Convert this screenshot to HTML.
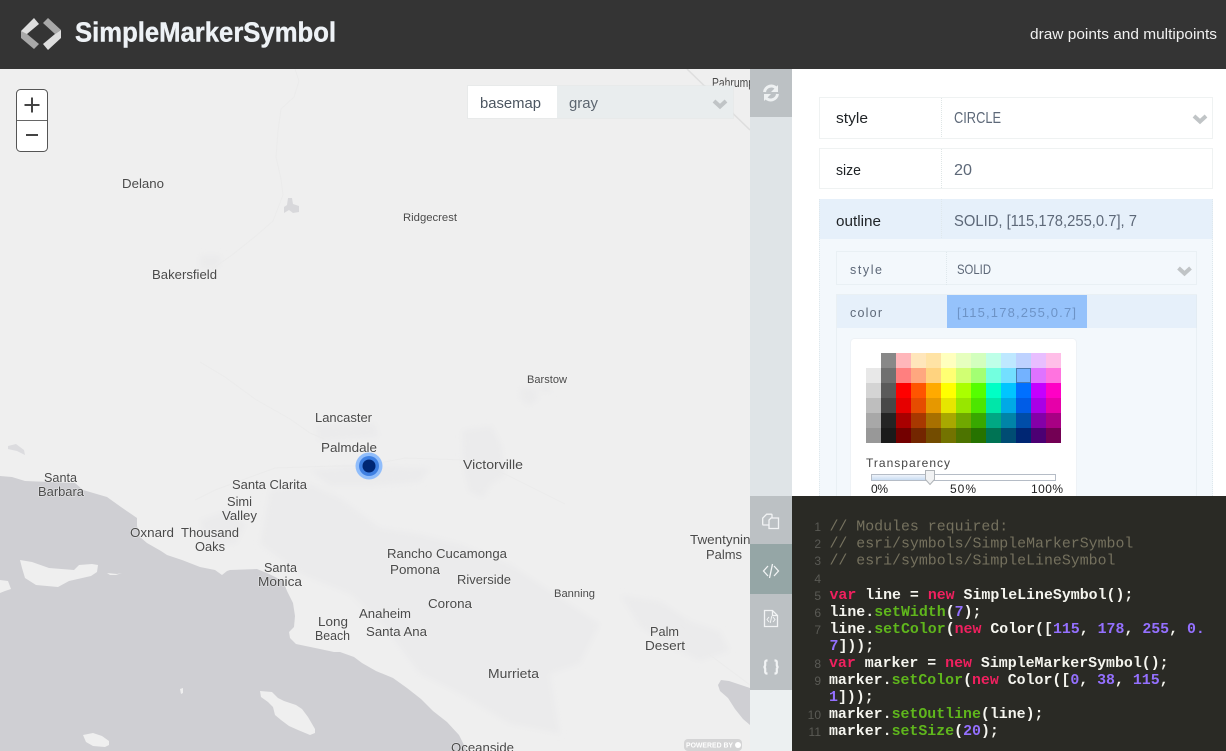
<!DOCTYPE html>
<html lang="en">
<head>
<meta charset="utf-8">
<title>SimpleMarkerSymbol</title>
<style>
html,body{margin:0;padding:0;width:1226px;height:751px;overflow:hidden;background:#fff}
svg{display:block;position:absolute;left:0;top:0}
text{font-family:"Liberation Sans",sans-serif}
.m text{fill:#4a4a4a;font-size:13px;stroke:#f4f4f4;stroke-width:1px;paint-order:stroke;stroke-opacity:.7}
.s text{font-size:11px}
.l text{fill:#1f2326;font-size:15px}
.v text{fill:#5d6878;font-size:15.500px}
.sub text{font-size:12.5px;fill:#5d6878}
.code text{font-family:"Liberation Mono",monospace;font-size:14.9px;font-weight:bold;fill:#f5f5ef;white-space:pre}
.code .c{font-weight:normal;fill:#75715e}
.code .n{font-weight:normal;fill:#5a5a55;font-size:12px;text-anchor:end;font-family:"Liberation Sans",sans-serif}
.k{fill:#f0205f}.f{fill:#5fb61c}.d{fill:#9470ff}
</style>
</head>
<body>
<svg width="1226" height="751" viewBox="0 0 1226 751" xmlns="http://www.w3.org/2000/svg">
<defs>
<clipPath id="mc"><rect x="0" y="69" width="750" height="682"/></clipPath>
<clipPath id="pc"><rect x="792" y="69" width="434" height="427"/></clipPath>
<linearGradient id="sl" x1="0" y1="0" x2="0" y2="1"><stop offset="0" stop-color="#eef3fa"/><stop offset="1" stop-color="#c8dcf2"/></linearGradient>
<filter id="bl" x="-10%" y="-10%" width="120%" height="120%"><feGaussianBlur stdDeviation="3"/></filter>
</defs>

<!-- map -->
<g clip-path="url(#mc)">
<rect x="0" y="69" width="750" height="682" fill="#efefef"/>
<!-- urban tint -->
<g fill="#ebebec" filter="url(#bl)">
<path d="M462 430l30-4 10 20 3 30-14 8-8 14-14-6-6-26z"/>
<path d="M310 470l60-4 60 2-10 14-50 4-40 0z"/>
<path d="M270 490l40-6 30 14 40 30 40 6 40 10 50 20 60 40 30 20-20 40-30 10 10 60-50-10-50-30-40-20-30-40-40-40-50-20-40-30z"/>
<path d="M620 595l40 6 30 20 30 10 10 20-30 10-30-14-30-20z"/>
<path d="M200 520l30-10 16 14-10 20-30 0z"/>
<path d="M315 425l60-2 4 14-60 4z"/>
<path d="M520 388h16l2 12-10 6-8-8zM540 386h10l2 6h-12z"/>
<path d="M200 255h22l-4 14h-18z"/>
</g>
<g fill="none" stroke="#ebebeb" stroke-width="1">
<path d="M295 69l4 12-5 16-13 12-3 22-2 26 5 22 2 16-10 26-16 14-25 20-20 14"/>
<path d="M200 362l25 15 30 22 35 20 20 14 14 6"/>
<path d="M195 500l20-10 60-22 60-2 30 0 40-8 60 2 40 14 60 30"/>
<path d="M680 625l30 30 40 30"/>
</g>
<path d="M687 69l63 61" fill="none" stroke="#dedede" stroke-width="1.5"/>
<path d="M284 207l3-2 1-7 4 0 1 6 6 2 0 6-6 1-4-3-5 3z" fill="#d8d8db"/>
<path d="M8 446l8-2 8 6 1 5-8-4-9-2z" fill="#dcdcdf"/>
<!-- ocean -->
<path fill="#cfcfd3" d="M0 476l12 1 13 4 25 1 25 1 8 7 24 7 14 10 16 11 0 8 3 11 7 6 14 8 6 4 15 5 18 7 15 3 7 5 5-4 3-1 27-1 12 5 14 7 4 10 6 12 2 13-1 11-5 5 1 6 6 6 24 5 14 3 6 0 14 5 8 6 14 8 17 7 14 10 14 11 12 12 14 11 12 13 6 12 4 8H0z"/>
<!-- islands -->
<g fill="#efefef">
<path d="M20 560l12 2 17 6 25 2 5-5 13-1 6 1-1 7-6 4-22 5-11 6-22-2-11-7-3-10z"/>
<path d="M107 573l10 1 5-1-6 2-6 0z"/>
<path d="M0 580l8 1 3 8-6 2-5 2z"/>
<path d="M260 691l12 1 6 6 6 3 12 4 6 4 6 8 7 12 0 4-5 2-12-5-9-4-8-6-6-5-2-8-5-5-7-5z"/>
<path d="M83 735l10-2 9 3 7 5 0 4-4 2-12-1-7-4z"/>
<path d="M180 689l3-1 0 5-2 1z"/>
</g>
<path fill="#cfcfd3" d="M718 685l3-5 8 1 21 7v37l-7-6-8-10-7-11-8-7z"/>
<!-- labels -->
<g class="m">
<text x="712" y="87" textLength="42" lengthAdjust="spacingAndGlyphs">Pahrump</text>
<text x="122" y="188" textLength="42" lengthAdjust="spacingAndGlyphs">Delano</text>
<text x="152" y="279" textLength="65" lengthAdjust="spacingAndGlyphs">Bakersfield</text>
<text x="315" y="422" textLength="57" lengthAdjust="spacingAndGlyphs">Lancaster</text>
<text x="321" y="452" textLength="56" lengthAdjust="spacingAndGlyphs">Palmdale</text>
<text x="463" y="469" textLength="60" lengthAdjust="spacingAndGlyphs">Victorville</text>
<text x="44" y="482" textLength="33" lengthAdjust="spacingAndGlyphs">Santa</text>
<text x="38" y="496" textLength="46" lengthAdjust="spacingAndGlyphs">Barbara</text>
<text x="232" y="489" textLength="75" lengthAdjust="spacingAndGlyphs">Santa Clarita</text>
<text x="227" y="506" textLength="25" lengthAdjust="spacingAndGlyphs">Simi</text>
<text x="222" y="520" textLength="35" lengthAdjust="spacingAndGlyphs">Valley</text>
<text x="130" y="537" textLength="44" lengthAdjust="spacingAndGlyphs">Oxnard</text>
<text x="181" y="537" textLength="58" lengthAdjust="spacingAndGlyphs">Thousand</text>
<text x="195" y="551" textLength="30" lengthAdjust="spacingAndGlyphs">Oaks</text>
<text x="264" y="572" textLength="33" lengthAdjust="spacingAndGlyphs">Santa</text>
<text x="258" y="586" textLength="44" lengthAdjust="spacingAndGlyphs">Monica</text>
<text x="387" y="558" textLength="120" lengthAdjust="spacingAndGlyphs">Rancho Cucamonga</text>
<text x="390" y="574" textLength="50" lengthAdjust="spacingAndGlyphs">Pomona</text>
<text x="457" y="584" textLength="54" lengthAdjust="spacingAndGlyphs">Riverside</text>
<text x="428" y="608" textLength="44" lengthAdjust="spacingAndGlyphs">Corona</text>
<text x="359" y="618" textLength="52" lengthAdjust="spacingAndGlyphs">Anaheim</text>
<text x="366" y="636" textLength="61" lengthAdjust="spacingAndGlyphs">Santa Ana</text>
<text x="318" y="626" textLength="30" lengthAdjust="spacingAndGlyphs">Long</text>
<text x="315" y="640" textLength="35" lengthAdjust="spacingAndGlyphs">Beach</text>
<text x="650" y="636" textLength="29" lengthAdjust="spacingAndGlyphs">Palm</text>
<text x="645" y="650" textLength="40" lengthAdjust="spacingAndGlyphs">Desert</text>
<text x="690" y="544" textLength="68" lengthAdjust="spacingAndGlyphs">Twentynine</text>
<text x="706" y="559" textLength="36" lengthAdjust="spacingAndGlyphs">Palms</text>
<text x="488" y="678" textLength="51" lengthAdjust="spacingAndGlyphs">Murrieta</text>
<text x="451" y="752" textLength="63" lengthAdjust="spacingAndGlyphs">Oceanside</text>
</g>
<g class="m s">
<text x="403" y="221" textLength="54" lengthAdjust="spacingAndGlyphs">Ridgecrest</text>
<text x="527" y="383" textLength="40" lengthAdjust="spacingAndGlyphs">Barstow</text>
<text x="554" y="597" textLength="41" lengthAdjust="spacingAndGlyphs">Banning</text>
</g>
<!-- marker -->
<circle cx="369" cy="466" r="13.5" fill="#90bdfb"/>
<circle cx="369" cy="466" r="10" fill="#3f80e2"/>
<circle cx="369" cy="466" r="6.5" fill="#002673"/>
<!-- powered by -->
<rect x="684" y="739" width="58" height="12" rx="4" fill="#b9b9bc" opacity=".5"/>
<text x="686" y="747.500" font-size="7" font-weight="bold" fill="#fff" textLength="47" lengthAdjust="spacingAndGlyphs">POWERED BY</text>
<circle cx="738" cy="745" r="3" fill="#fff"/>
</g>

<!-- zoom control -->
<rect x="16.500" y="89.500" width="31" height="62" rx="4" fill="#fff" stroke="#555"/>
<path d="M17 120.500h30" stroke="#666"/>
<path d="M24.500 105h15M32 97.500v15" stroke="#444" stroke-width="2"/>
<path d="M26 135h12" stroke="#444" stroke-width="2"/>

<!-- basemap -->
<rect x="468" y="86" width="265" height="32" fill="#e9edee"/>
<rect x="468" y="86" width="89" height="32" fill="#fff"/>
<rect x="467.500" y="85.500" width="266" height="33" fill="none" stroke="#e2e6e6" stroke-dasharray="1 1"/>
<text x="480" y="108" font-size="15" fill="#4c5661" textLength="61" lengthAdjust="spacingAndGlyphs">basemap</text>
<text x="569" y="108" font-size="15" fill="#5d6670" textLength="29" lengthAdjust="spacingAndGlyphs">gray</text>
<path d="M714 101l6 5.500 6-5.500" fill="none" stroke="#c0c4c6" stroke-width="4"/>

<!-- header -->
<rect x="0" y="0" width="1226" height="69" fill="#343434"/>
<path d="M21 31L34 18l5 6-12 10-6 4z" fill="#dedede"/>
<path d="M21 31v7l13 11 5-5-12-10z" fill="#a8a8a8"/>
<path d="M48 18l-5 5 12 11 6-4v0z" fill="#a8a8a8"/>
<path d="M61 30v8L48 50l-5-6 12-10z" fill="#dedede"/>
<text x="75" y="41.500" font-size="27.500" font-weight="bold" fill="#eef2f6" stroke="#eef2f6" stroke-width=".4" textLength="261" lengthAdjust="spacingAndGlyphs">SimpleMarkerSymbol</text>
<text x="1030" y="39" font-size="15" fill="#f0f0f0" textLength="187" lengthAdjust="spacingAndGlyphs">draw points and multipoints</text>

<!-- side strip -->
<rect x="750" y="69" width="42" height="682" fill="#dfe4e7"/>
<rect x="750" y="69" width="42" height="48" fill="#bcc1c4"/>
<g fill="none" stroke="#eef1f2" stroke-width="3">
<path d="M764.500 92a6.800 6.800 0 0 1 12-3.500"/>
<path d="M777.500 94a6.800 6.800 0 0 1-12 3.500"/>
</g>
<path d="M778 85v7h-7zM764 101v-7h7z" fill="#eef1f2"/>
<rect x="750" y="496" width="42" height="194" fill="#bcc1c4"/>
<rect x="750" y="544" width="42" height="50" fill="#95a6a6"/>
<rect x="750" y="690" width="42" height="61" fill="#ecf0f1"/>
<g fill="none" stroke="#f2f4f5" stroke-width="1.300">
<path d="M769 525h-5.500a.8.800 0 0 1-.8-.8v-6l4-4h4.500a.8.800 0 0 1 .8.8v3"/>
<path d="M771 518h7.500v10.500h-9.500v-8.500z" fill="#bcc1c4"/>
<path d="M768 566l-4.500 5 4.500 5M774 566l4.500 5-4.500 5M772.500 564l-3 14"/>
<path d="M764.500 610.500h8l5 5v11h-13zM772.500 610.500v5h5"/>
<path d="M769 617l-2 2.500 2 2.500M773 617l2 2.500-2 2.500M771.800 616l-1.600 7" stroke-width="1"/>
<path d="M767.500 660.500h-.8a1.500 1.500 0 0 0-1.500 1.500v3a2 2 0 0 1-1.500 2 2 2 0 0 1 1.500 2v3a1.500 1.500 0 0 0 1.500 1.500h.8M774.500 660.500h.8a1.500 1.500 0 0 1 1.500 1.500v3a2 2 0 0 0 1.500 2 2 2 0 0 0-1.500 2v3a1.500 1.500 0 0 1-1.500 1.500h-.8" stroke-width="2.200"/>
</g>

<!-- panel -->
<g clip-path="url(#pc)">
<g fill="#fff" stroke="#dfe6e6" stroke-dasharray="1 1">
<rect x="819.500" y="97.500" width="393" height="41"/>
<rect x="819.500" y="148.500" width="393" height="40"/>
</g>
<path d="M941.500 98v40M941.500 149v40" stroke="#dfe6e6" stroke-dasharray="1 1"/>
<rect x="819" y="199" width="394" height="300" fill="#f3f8fc"/>
<rect x="819" y="199" width="394" height="40" fill="#e6f0fa"/>
<path d="M941.500 199v40M1212.500 199v300M819.500 199v300" stroke="#dfe8ec" stroke-dasharray="1 1"/>
<g class="l">
<text x="836" y="123" textLength="32" lengthAdjust="spacingAndGlyphs">style</text>
<text x="836" y="175" textLength="25" lengthAdjust="spacingAndGlyphs">size</text>
<text x="836" y="226" textLength="45" lengthAdjust="spacingAndGlyphs">outline</text>
</g>
<g class="v">
<text x="954" y="123" textLength="47" lengthAdjust="spacingAndGlyphs">CIRCLE</text>
<text x="954" y="175" textLength="18" lengthAdjust="spacingAndGlyphs">20</text>
<text x="954" y="226" textLength="183" lengthAdjust="spacingAndGlyphs">SOLID, [115,178,255,0.7], 7</text>
</g>
<path d="M1194 116l6 5.500 6-5.500M1178.500 268l6 5.500 6-5.500" fill="none" stroke="#c0c4c6" stroke-width="4"/>
<rect x="836.500" y="251.500" width="360" height="33" fill="none" stroke="#dfe8ec" stroke-dasharray="1 1"/>
<path d="M946.500 252v33" stroke="#dfe8ec" stroke-dasharray="1 1"/>
<rect x="837" y="295" width="360" height="33" fill="#e6f0fa"/>
<rect x="836.500" y="294.500" width="360" height="210" fill="none" stroke="#dfe8ec" stroke-dasharray="1 1"/>
<rect x="947" y="295" width="140" height="33" fill="#95c2fb"/>
<g class="sub">
<text x="850" y="274" textLength="32">style</text>
<text x="850" y="317" textLength="32">color</text>
<text x="957" y="274" textLength="34" lengthAdjust="spacingAndGlyphs" style="font-size:14px">SOLID</text>
<text x="957" y="317" textLength="119" style="fill:#6d93c6;font-size:13px">[115,178,255,0.7]</text>
</g>
<rect x="850.500" y="338.500" width="226" height="170" rx="4" fill="#fff" stroke="#eef2f6"/>

<!-- palette -->
<g>
<g transform="translate(866 353)">
<path fill="#fff" d="M0 0h15v15H0z"/><path fill="#888888" d="M15 0h15v15H15z"/><path fill="#ffb6ba" d="M30 0h15v15H30z"/><path fill="#ffe6bb" d="M45 0h15v15H45z"/><path fill="#ffe3a5" d="M60 0h15v15H60z"/><path fill="#ffffbe" d="M75 0h15v15H75z"/><path fill="#e6ffbe" d="M90 0h15v15H90z"/><path fill="#d3ffbe" d="M105 0h15v15h-15z"/><path fill="#beffe8" d="M120 0h15v15h-15z"/><path fill="#bee8ff" d="M135 0h15v15h-15z"/><path fill="#bed2ff" d="M150 0h15v15h-15z"/><path fill="#e8beff" d="M165 0h15v15h-15z"/><path fill="#ffbee8" d="M180 0h15v15h-15z"/>
<path fill="#e8e8e8" d="M0 15h15v15H0z"/><path fill="#707070" d="M15 15h15v15H15z"/><path fill="#ff7f7f" d="M30 15h15v15H30z"/><path fill="#ffa77f" d="M45 15h15v15H45z"/><path fill="#ffd37f" d="M60 15h15v15H60z"/><path fill="#ffff73" d="M75 15h15v15H75z"/><path fill="#d1ff73" d="M90 15h15v15H90z"/><path fill="#a3ff73" d="M105 15h15v15h-15z"/><path fill="#73ffdf" d="M120 15h15v15h-15z"/><path fill="#73dfff" d="M135 15h15v15h-15z"/><path fill="#73b2ff" d="M150 15h15v15h-15z"/><path fill="#df73ff" d="M165 15h15v15h-15z"/><path fill="#ff73df" d="M180 15h15v15h-15z"/>
<path fill="#d4d4d4" d="M0 30h15v15H0z"/><path fill="#5a5a5a" d="M15 30h15v15H15z"/><path fill="#ff0000" d="M30 30h15v15H30z"/><path fill="#ff5500" d="M45 30h15v15H45z"/><path fill="#ffaa00" d="M60 30h15v15H60z"/><path fill="#ffff00" d="M75 30h15v15H75z"/><path fill="#aaff00" d="M90 30h15v15H90z"/><path fill="#55ff00" d="M105 30h15v15h-15z"/><path fill="#00ffc5" d="M120 30h15v15h-15z"/><path fill="#00c5ff" d="M135 30h15v15h-15z"/><path fill="#0070ff" d="M150 30h15v15h-15z"/><path fill="#c500ff" d="M165 30h15v15h-15z"/><path fill="#ff00c5" d="M180 30h15v15h-15z"/>
<path fill="#bebebe" d="M0 45h15v15H0z"/><path fill="#484848" d="M15 45h15v15H15z"/><path fill="#e60000" d="M30 45h15v15H30z"/><path fill="#e64c00" d="M45 45h15v15H45z"/><path fill="#e69800" d="M60 45h15v15H60z"/><path fill="#e6e600" d="M75 45h15v15H75z"/><path fill="#98e600" d="M90 45h15v15H90z"/><path fill="#4ce600" d="M105 45h15v15h-15z"/><path fill="#00e6a9" d="M120 45h15v15h-15z"/><path fill="#00a9e6" d="M135 45h15v15h-15z"/><path fill="#005ce6" d="M150 45h15v15h-15z"/><path fill="#a900e6" d="M165 45h15v15h-15z"/><path fill="#e600a9" d="M180 45h15v15h-15z"/>
<path fill="#a8a8a8" d="M0 60h15v15H0z"/><path fill="#242424" d="M15 60h15v15H15z"/><path fill="#a80000" d="M30 60h15v15H30z"/><path fill="#a83800" d="M45 60h15v15H45z"/><path fill="#a87000" d="M60 60h15v15H60z"/><path fill="#a8a800" d="M75 60h15v15H75z"/><path fill="#70a800" d="M90 60h15v15H90z"/><path fill="#38a800" d="M105 60h15v15h-15z"/><path fill="#00a884" d="M120 60h15v15h-15z"/><path fill="#0084a8" d="M135 60h15v15h-15z"/><path fill="#004da8" d="M150 60h15v15h-15z"/><path fill="#8400a8" d="M165 60h15v15h-15z"/><path fill="#a80084" d="M180 60h15v15h-15z"/>
<path fill="#989898" d="M0 75h15v15H0z"/><path fill="#1a1a1a" d="M15 75h15v15H15z"/><path fill="#730000" d="M30 75h15v15H30z"/><path fill="#732600" d="M45 75h15v15H45z"/><path fill="#734c00" d="M60 75h15v15H60z"/><path fill="#737300" d="M75 75h15v15H75z"/><path fill="#4c7300" d="M90 75h15v15H90z"/><path fill="#267300" d="M105 75h15v15h-15z"/><path fill="#007354" d="M120 75h15v15h-15z"/><path fill="#004c73" d="M135 75h15v15h-15z"/><path fill="#002673" d="M150 75h15v15h-15z"/><path fill="#4c0073" d="M165 75h15v15h-15z"/><path fill="#730054" d="M180 75h15v15h-15z"/>
<rect x="150.500" y="15.500" width="14" height="14" fill="none" stroke="#4c7cb0" stroke-width="1"/>
</g>
</g>
<text x="866" y="467" font-size="12" fill="#444" textLength="84">Transparency</text>
<rect x="871.500" y="474.500" width="184" height="6" fill="#fff" stroke="#b5bcc6"/>
<rect x="872" y="475" width="58" height="5" fill="url(#sl)"/>
<path d="M925.500 470.500h9v9l-4.500 5-4.500-5z" fill="#f1f2f3" stroke="#b0b4b8"/>
<g font-size="12" fill="#222">
<text x="871" y="493" textLength="17">0%</text>
<text x="950" y="493" textLength="26">50%</text>
<text x="1031" y="493" textLength="32">100%</text>
</g>
</g>

<!-- code -->
<rect x="792" y="496" width="434" height="255" fill="#2a2a25"/>
<g class="code" xml:space="preserve">
<text class="n" x="821" y="531">1</text>
<text class="n" x="821" y="548">2</text>
<text class="n" x="821" y="565">3</text>
<text class="n" x="821" y="583">4</text>
<text class="n" x="821" y="600">5</text>
<text class="n" x="821" y="617">6</text>
<text class="n" x="821" y="634">7</text>
<text class="n" x="821" y="668">8</text>
<text class="n" x="821" y="685">9</text>
<text class="n" x="821" y="719">10</text>
<text class="n" x="821" y="736">11</text>
<text class="c" x="829.500" y="530.500">// Modules required:</text>
<text class="c" x="829.500" y="547.500">// esri/symbols/SimpleMarkerSymbol</text>
<text class="c" x="829.500" y="564.500">// esri/symbols/SimpleLineSymbol</text>
<text x="829.500" y="599"><tspan class="k">var</tspan> line = <tspan class="k">new</tspan> SimpleLineSymbol();</text>
<text x="829.500" y="616">line.<tspan class="f">setWidth</tspan>(<tspan class="d">7</tspan>);</text>
<text x="829.500" y="633">line.<tspan class="f">setColor</tspan>(<tspan class="k">new</tspan> Color([<tspan class="d">115</tspan>, <tspan class="d">178</tspan>, <tspan class="d">255</tspan>, <tspan class="d">0.</tspan></text>
<text x="829.500" y="650"><tspan class="d">7</tspan>]));</text>
<text x="829" y="667"><tspan class="k">var</tspan> marker = <tspan class="k">new</tspan> SimpleMarkerSymbol();</text>
<text x="829" y="684">marker.<tspan class="f">setColor</tspan>(<tspan class="k">new</tspan> Color([<tspan class="d">0</tspan>, <tspan class="d">38</tspan>, <tspan class="d">115</tspan>,</text>
<text x="829" y="701"><tspan class="d">1</tspan>]));</text>
<text x="829" y="718">marker.<tspan class="f">setOutline</tspan>(line);</text>
<text x="829" y="735">marker.<tspan class="f">setSize</tspan>(<tspan class="d">20</tspan>);</text>
</g>
</svg>
</body>
</html>
